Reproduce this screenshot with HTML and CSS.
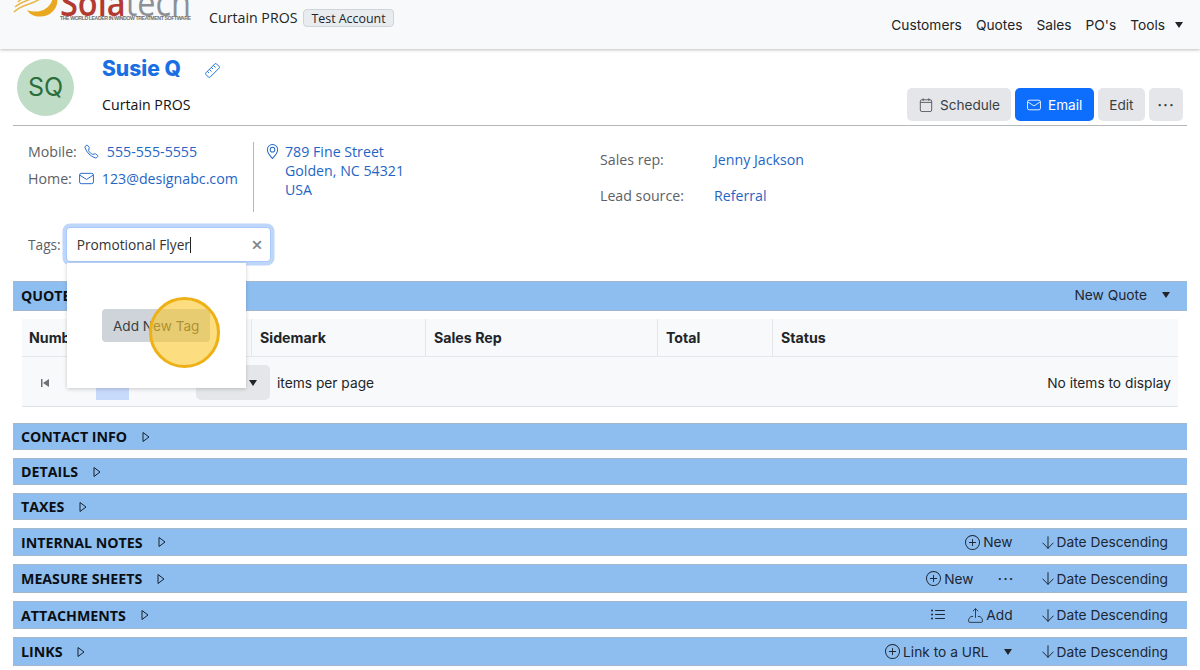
FILE: index.html
```html
<!DOCTYPE html>
<html lang="en">
  <head>
    <meta charset="UTF-8" />
    <meta name="viewport" content="width=device-width, initial-scale=1.0" />
    <title>Susie Q - Curtain PROS</title>
    <link rel="stylesheet" href="styles.css">
  </head>
  <body>
    <svg class="sprite" aria-hidden="true">
      <symbol id="i-phone" viewBox="0 0 16 16"><path fill="none" stroke="currentColor" d="M3.654 1.328a.678.678 0 0 0-1.015-.063L1.605 2.3c-.483.484-.661 1.169-.45 1.77a17.568 17.568 0 0 0 4.168 6.608 17.569 17.569 0 0 0 6.608 4.168c.601.211 1.286.033 1.77-.45l1.034-1.034a.678.678 0 0 0-.063-1.015l-2.307-1.794a.678.678 0 0 0-.58-.122l-2.19.547a1.745 1.745 0 0 1-1.657-.459L5.482 8.062a1.745 1.745 0 0 1-.46-1.657l.548-2.19a.678.678 0 0 0-.122-.58L3.654 1.328z"/></symbol>
      <symbol id="i-mail" viewBox="0 0 16 16"><g fill="none" stroke="currentColor"><rect x=".6" y="2.500" width="14.800" height="11" rx="1.800"/><path d="M1 4.500 8 9l7-4.500"/></g></symbol>
      <symbol id="i-pin" viewBox="0 0 16 16"><path fill="currentColor" d="M12.166 8.94c-.524 1.062-1.234 2.12-1.96 3.07A31.493 31.493 0 0 1 8 14.58a31.481 31.481 0 0 1-2.206-2.57c-.726-.95-1.436-2.008-1.96-3.07C3.304 7.867 3 6.862 3 6a5 5 0 0 1 10 0c0 .862-.305 1.867-.834 2.94zM8 16s6-5.686 6-10A6 6 0 0 0 2 6c0 4.314 6 10 6 10z"/><path fill="currentColor" d="M8 8a2 2 0 1 1 0-4 2 2 0 0 1 0 4zm0 1a3 3 0 1 0 0-6 3 3 0 0 0 0 6z"/></symbol>
      <symbol id="i-calendar" viewBox="0 0 16 16"><g fill="none" stroke="currentColor" stroke-width=".9"><rect x="1.500" y="2" width="13" height="13.500" rx="1.800"/><path d="M1.500 5h13M4.800 .4v2.800M11.200 .4v2.800"/></g></symbol>
      <symbol id="i-plus" viewBox="0 0 16 16"><path fill="currentColor" d="M8 15A7 7 0 1 1 8 1a7 7 0 0 1 0 14zm0 1A8 8 0 1 0 8 0a8 8 0 0 0 0 16z"/><path fill="currentColor" d="M8 4a.5.5 0 0 1 .5.5v3h3a.5.5 0 0 1 0 1h-3v3a.5.5 0 0 1-1 0v-3h-3a.5.5 0 0 1 0-1h3v-3A.5.5 0 0 1 8 4z"/></symbol>
      <symbol id="i-down" viewBox="0 0 12 13"><path fill="none" stroke="currentColor" stroke-linecap="round" d="M6 .7v11.600M.8 7 6 12.300 11.200 7"/></symbol>
      <symbol id="i-list" viewBox="0 0 16 16"><path fill="currentColor" d="M5 11.5a.5.5 0 0 1 .5-.5h9a.5.5 0 0 1 0 1h-9a.5.5 0 0 1-.5-.5zm0-4a.5.5 0 0 1 .5-.5h9a.5.5 0 0 1 0 1h-9a.5.5 0 0 1-.5-.5zm0-4a.5.5 0 0 1 .5-.5h9a.5.5 0 0 1 0 1h-9a.5.5 0 0 1-.5-.5zm-3 1a1 1 0 1 0 0-2 1 1 0 0 0 0 2zm0 4a1 1 0 1 0 0-2 1 1 0 0 0 0 2zm0 4a1 1 0 1 0 0-2 1 1 0 0 0 0 2z"/></symbol>
      <symbol id="i-upload" viewBox="0 0 16 16"><path fill="none" stroke="currentColor" stroke-width=".9" d="M8 10.500V.7M5.200 3.400 8 .7l2.800 2.700M5.500 9H3L.7 12v2.300a1 1 0 0 0 1 1h12.600a1 1 0 0 0 1-1V12L13 9h-2.500"/></symbol>
      <symbol id="i-ruler" viewBox="0 0 16 16"><g transform="rotate(-45 8 8)" fill="none" stroke="currentColor"><rect x="0" y="4.800" width="16" height="6.400" rx="1.200"/><path d="M3.500 4.800v2.400M6.500 4.800v3.200M9.500 4.800v2.400M12.500 4.800v3.200"/></g></symbol>
      <symbol id="i-caret" viewBox="0 0 8 12"><path fill="none" stroke="currentColor" stroke-linejoin="round" d="M1 1.500 7 6l-6 4.500z"/></symbol>
      <symbol id="i-first" viewBox="0 0 8 8"><path fill="currentColor" d="M0 0h1.500v8H0zM8 0v8L2 4z"/></symbol>
    </svg>

    <header class="topbar">
      <svg class="logo" viewBox="0 0 180 22" width="180" height="22">
        <path fill="#e9a820" d="M14 10C28 15 40 8 41 -8C50 2 40 20 22 16C18 15 16 13 14 10z"/>
        <path fill="none" stroke="#eab64a" stroke-width="1.500" d="M1 12C9 4 20 5 30 -3M2 7C10 0 18 1 26 -6M5 2C11 -4 16 -4 22 -9"/>
        <text class="logo-name" x="47" y="15.500" textLength="131" lengthAdjust="spacingAndGlyphs"><tspan class="logo-sola">Sola</tspan><tspan class="logo-tech">tech</tspan></text>
        <text class="logo-tag" x="47" y="19.500" textLength="131">THE WORLD LEADER IN WINDOW TREATMENT SOFTWARE</text>
      </svg>
      <span class="brand">Curtain PROS</span>
      <span class="badge">Test Account</span>
      <nav class="nav">
        <a>Customers</a>
        <a>Quotes</a>
        <a>Sales</a>
        <a>PO's</a>
        <a class="nav-tools">Tools <i class="tri"></i></a>
      </nav>
    </header>

    <main class="page">
      <section class="customer-head">
        <div class="avatar">SQ</div>
        <div class="customer-name">
          <h1>Susie Q <svg class="icon ruler"><use href="#i-ruler"/></svg></h1>
          <p>Curtain PROS</p>
        </div>
        <div class="head-actions">
          <button class="btn"><svg class="icon"><use href="#i-calendar"/></svg>Schedule</button>
          <button class="btn btn-blue"><svg class="icon"><use href="#i-mail"/></svg>Email</button>
          <button class="btn">Edit</button>
          <button class="btn btn-more">&middot;&middot;&middot;</button>
        </div>
      </section>

      <section class="customer-info">
        <div class="contact">
          <p><span class="muted">Mobile:</span><svg class="icon link-icon"><use href="#i-phone"/></svg><a>555-555-5555</a></p>
          <p><span class="muted">Home:</span><svg class="icon link-icon"><use href="#i-mail"/></svg><a>123@designabc.com</a></p>
        </div>
        <div class="address">
          <svg class="icon link-icon"><use href="#i-pin"/></svg>
          <a>789 Fine Street<br>Golden, NC 54321<br>USA</a>
        </div>
        <dl class="meta">
          <dt>Sales rep:</dt><dd><a>Jenny Jackson</a></dd>
          <dt>Lead source:</dt><dd><a>Referral</a></dd>
        </dl>
      </section>

      <div class="tags">
        <span class="muted">Tags:</span>
        <div class="tag-input">
          <span class="tag-value">Promotional Flyer</span>
          <span class="tag-clear">&times;</span>
          <div class="tag-popup"><button class="add-tag">Add New Tag</button></div>
        </div>
      </div>

      <section class="panel panel-quotes">
        <div class="bar">
          <h2>Quotes</h2>
          <div class="bar-right"><span>New Quote</span><i class="tri"></i></div>
        </div>
        <div class="grid">
          <div class="grid-head">
            <span class="col-number">Number</span>
            <span class="col-sidemark">Sidemark</span>
            <span class="col-rep">Sales Rep</span>
            <span class="col-total">Total</span>
            <span class="col-status">Status</span>
          </div>
          <div class="grid-pager">
            <svg class="first"><use href="#i-first"/></svg>
            <span class="page-num"></span>
            <span class="page-size"><i class="tri"></i></span>
            <span>items per page</span>
            <span class="no-items">No items to display</span>
          </div>
        </div>
      </section>

      <section class="panel">
        <div class="bar bar-27"><h2>Contact Info</h2><svg class="caret"><use href="#i-caret"/></svg></div>
      </section>
      <section class="panel">
        <div class="bar bar-27"><h2>Details</h2><svg class="caret"><use href="#i-caret"/></svg></div>
      </section>
      <section class="panel">
        <div class="bar bar-27"><h2>Taxes</h2><svg class="caret"><use href="#i-caret"/></svg></div>
      </section>
      <section class="panel">
        <div class="bar bar-28">
          <h2>Internal Notes</h2><svg class="caret"><use href="#i-caret"/></svg>
          <div class="bar-right">
            <span class="action"><svg class="icon"><use href="#i-plus"/></svg>New</span>
            <span class="sort"><svg class="sort-arrow"><use href="#i-down"/></svg>Date Descending</span>
          </div>
        </div>
      </section>
      <section class="panel">
        <div class="bar bar-29">
          <h2>Measure Sheets</h2><svg class="caret"><use href="#i-caret"/></svg>
          <div class="bar-right">
            <span class="action"><svg class="icon"><use href="#i-plus"/></svg>New</span>
            <span class="action dots">&middot;&middot;&middot;</span>
            <span class="sort"><svg class="sort-arrow"><use href="#i-down"/></svg>Date Descending</span>
          </div>
        </div>
      </section>
      <section class="panel">
        <div class="bar bar-28">
          <h2>Attachments</h2><svg class="caret"><use href="#i-caret"/></svg>
          <div class="bar-right">
            <svg class="icon list-icon"><use href="#i-list"/></svg>
            <span class="action"><svg class="icon"><use href="#i-upload"/></svg>Add</span>
            <span class="sort"><svg class="sort-arrow"><use href="#i-down"/></svg>Date Descending</span>
          </div>
        </div>
      </section>
      <section class="panel">
        <div class="bar bar-29">
          <h2>Links</h2><svg class="caret"><use href="#i-caret"/></svg>
          <div class="bar-right">
            <span class="action"><svg class="icon"><use href="#i-plus"/></svg>Link to a URL</span>
            <i class="tri link-tri"></i>
            <span class="sort"><svg class="sort-arrow"><use href="#i-down"/></svg>Date Descending</span>
          </div>
        </div>
      </section>
    </main>

    <div class="click-spot"></div>
  </body>
</html>
```

FILE: styles.css
```css
html,
body {
  height: 670px;
  overflow: hidden;
}
body {
  position: relative;
  margin: 0;
  background-color: white;
  color: #212529;
  font-family: Inter, "Liberation Sans", sans-serif;
  font-size: 13.75px;
}
p,
h1,
h2,
dl,
dd {
  margin: 0;
}
a {
  color: #1f65c4;
  text-decoration: none;
}
.sprite {
  display: none;
}
.icon {
  width: 15px;
  height: 15px;
  flex: none;
}
.tri {
  display: inline-block;
  width: 0;
  height: 0;
  border-left: 4px solid transparent;
  border-right: 4px solid transparent;
  border-top: 6px solid #212529;
}

/* top bar */
.topbar {
  display: flex;
  align-items: flex-start;
  height: 49px;
  padding: 0 17px 0 13px;
  box-sizing: border-box;
  background-color: #f8f9fa;
  box-shadow: 0 1px 3px rgba(0, 0, 0, 0.25);
}
.logo {
  flex: none;
  margin-right: 16px;
}
.logo-name {
  font-family: "Open Sans", sans-serif;
  font-size: 36px;
}
.logo-sola {
  fill: #b23a32;
  font-weight: 600;
}
.logo-tech {
  fill: #8c9094;
}
.logo-tag {
  fill: #6d7074;
  font-family: "Liberation Sans", sans-serif;
  font-size: 5.2px;
  font-weight: bold;
}
.brand {
  margin-top: 8px;
  font-family: "Open Sans", sans-serif;
  font-size: 14.2px;
}
.badge {
  margin: 9px 0 0 6px;
  padding: 0 7px;
  height: 18px;
  line-height: 17px;
  box-sizing: border-box;
  background-color: #e9ecef;
  border: 1px solid #ced4da;
  border-radius: 4px;
  font-family: "Open Sans", sans-serif;
  font-size: 12.4px;
}
.nav {
  display: flex;
  align-items: center;
  gap: 14px;
  margin: 17px 0 0 auto;
}
.nav a {
  color: #212529;
}
.nav-tools .tri {
  margin-left: 6px;
  vertical-align: 2px;
}

/* customer header */
.page {
  padding: 0 13px;
}
.customer-head {
  display: flex;
  height: 77px;
  box-sizing: border-box;
  border-bottom: 1px solid #b5b8bb;
}
.avatar {
  width: 57px;
  height: 57px;
  margin: 10px 28px 0 4px;
  line-height: 57px;
  text-align: center;
  background-color: #bfdcc6;
  border-radius: 50%;
  color: #2b6e3c;
  font-size: 25px;
}
.customer-name h1 {
  margin-top: 6px;
  color: #1a6fe3;
  font-size: 21px;
  font-weight: 800;
  line-height: 27px;
}
.ruler {
  margin-left: 20px;
  vertical-align: -2px;
}
.customer-name p {
  margin-top: 13px;
  font-family: "Open Sans", sans-serif;
  font-size: 14.2px;
  color: #111;
}
.head-actions {
  display: flex;
  gap: 4px;
  margin: 39px 4px 0 auto;
}
.btn {
  display: flex;
  align-items: center;
  gap: 7px;
  height: 33px;
  padding: 0 11.5px;
  background-color: #e4e6ea;
  border: none;
  border-radius: 5px;
  color: #3a3f44;
  font-family: Inter, "Liberation Sans", sans-serif;
  font-size: 13.6px;
}
.btn .icon {
  width: 14px;
  height: 14px;
}
.btn-blue {
  background-color: #0d6efd;
  color: white;
}
.btn-more {
  justify-content: center;
  width: 34px;
  padding: 0;
  font-size: 17px;
  letter-spacing: 1px;
}

/* contact block */
.customer-info {
  display: flex;
  height: 87px;
  padding: 16px 0 0 15px;
  box-sizing: border-box;
  font-family: "Open Sans", sans-serif;
  font-size: 14.2px;
}
.muted {
  color: #5c6166;
}
.contact {
  width: 225px;
  height: 70px;
  border-right: 1px solid #b5b8bb;
}
.contact p {
  display: flex;
  align-items: center;
  height: 19px;
  margin-bottom: 8px;
}
.link-icon {
  margin: 0 8px 0 7px;
  color: #1f65c4;
}
.address {
  display: flex;
  width: 341px;
  line-height: 19px;
  padding-left: 5px;
}
.address .link-icon {
  margin: 2px 5px 0 6px;
}
.meta {
  display: grid;
  grid-template-columns: 114px auto;
  row-gap: 16px;
  align-content: start;
  margin-top: 8px;
  line-height: 20px;
}
.meta dt {
  color: #5c6166;
}

/* tags */
.tags {
  display: flex;
  align-items: center;
  gap: 5px;
  height: 35px;
  padding-left: 15px;
  margin-top: 14px;
  font-family: "Open Sans", sans-serif;
  font-size: 13.7px;
}
.tag-input {
  position: relative;
  display: flex;
  align-items: center;
  width: 205px;
  height: 35px;
  padding: 0 7px 0 10px;
  box-sizing: border-box;
  background-color: white;
  border: 1px solid #a9c8fb;
  border-radius: 4px;
  box-shadow: 0 0 0 3.5px #bfd6fb;
}
.tag-value {
  flex: 1;
  color: #333;
}
.tag-value::after {
  content: "";
  display: inline-block;
  width: 1px;
  height: 16px;
  vertical-align: -3px;
  background-color: #222;
}
.tag-clear {
  color: #808589;
  font-size: 20px;
  font-weight: 600;
  line-height: 1;
}
.tag-popup {
  position: absolute;
  z-index: 2;
  top: 35px;
  left: 0;
  display: flex;
  align-items: center;
  justify-content: center;
  width: 179px;
  height: 125px;
  background-color: white;
  box-shadow: 0 1px 4px rgba(0, 0, 0, 0.2);
}
.add-tag {
  width: 108px;
  height: 33px;
  background-color: #ced4da;
  border: none;
  border-radius: 4px;
  color: #3a3f44;
  font-family: Inter, "Liberation Sans", sans-serif;
  font-size: 13.6px;
}

/* collapsible panels */
.panel {
  margin-bottom: 8px;
}
.bar {
  display: flex;
  align-items: center;
  box-sizing: border-box;
  padding: 0 19px 0 8px;
  background-color: #8ebef0;
  border-top: 1px solid #a3b8cf;
  border-bottom: 1px solid #a3b8cf;
}
.bar-27 {
  height: 27px;
}
.bar-28 {
  height: 28px;
}
.bar-29 {
  height: 29px;
}
.bar h2 {
  color: #0b0f14;
  font-family: "Open Sans", sans-serif;
  font-size: 14.2px;
  font-weight: 700;
  text-transform: uppercase;
}
.caret {
  width: 8px;
  height: 12px;
  margin-left: 15px;
  color: #16202c;
}
.bar-right {
  display: flex;
  align-items: center;
  gap: 15px;
  margin-left: auto;
  color: #1d2733;
}
.action {
  display: flex;
  align-items: center;
  gap: 3px;
}
.sort {
  display: flex;
  align-items: center;
  gap: 3px;
  margin-left: 14px;
}
.sort-arrow {
  width: 12px;
  height: 13px;
}
.dots {
  width: 14px;
  margin: 0 1px 0 9px;
  font-size: 16px;
  letter-spacing: 1px;
}
.link-tri {
  margin-right: 1px;
}
.list-icon {
  width: 16px;
  height: 16px;
  margin-right: 7px;
}

/* quotes grid */
.panel-quotes .bar {
  height: 30px;
  padding-right: 17px;
  padding-bottom: 2px;
}
.panel-quotes {
  margin-top: 19px;
  margin-bottom: 16px;
}
.grid {
  margin: 8px 9px 0;
  background-color: #f8f9fa;
  border-bottom: 1px solid #dee2e6;
}
.grid-head {
  display: flex;
  align-items: center;
  height: 38px;
  box-sizing: border-box;
  border-bottom: 1px solid #e4e6e9;
  font-size: 14.2px;
  font-weight: 700;
}
.grid-head span {
  display: flex;
  align-items: center;
  height: 100%;
  box-sizing: border-box;
  padding-left: 8px;
  border-right: 1px solid #e4e6e9;
}
.grid-head .col-number {
  width: 230px;
  padding-left: 7px;
}
.col-sidemark {
  width: 174px;
}
.col-rep {
  width: 232px;
}
.col-total {
  width: 115px;
}
.grid-head .col-status {
  border-right: none;
}
.grid-pager {
  display: flex;
  align-items: center;
  height: 49px;
  padding: 2px 7px 0 19px;
  box-sizing: border-box;
}
.first {
  width: 8px;
  height: 8px;
  color: #6c7177;
}
.page-num {
  width: 33px;
  height: 35px;
  margin-left: 47px;
  background-color: #c8dafc;
}
.page-size {
  display: flex;
  align-items: center;
  justify-content: flex-end;
  width: 74px;
  height: 35px;
  margin: 0 7px 0 67px;
  padding-right: 13px;
  box-sizing: border-box;
  background-color: #e4e6ea;
  border-radius: 5px;
}
.no-items {
  margin-left: auto;
}

/* recorded click marker */
.click-spot {
  position: absolute;
  z-index: 3;
  left: 149px;
  top: 297px;
  width: 71px;
  height: 71px;
  box-sizing: border-box;
  background-color: rgba(250, 199, 44, 0.6);
  border: 3px solid #edb016;
  border-radius: 50%;
}
```
